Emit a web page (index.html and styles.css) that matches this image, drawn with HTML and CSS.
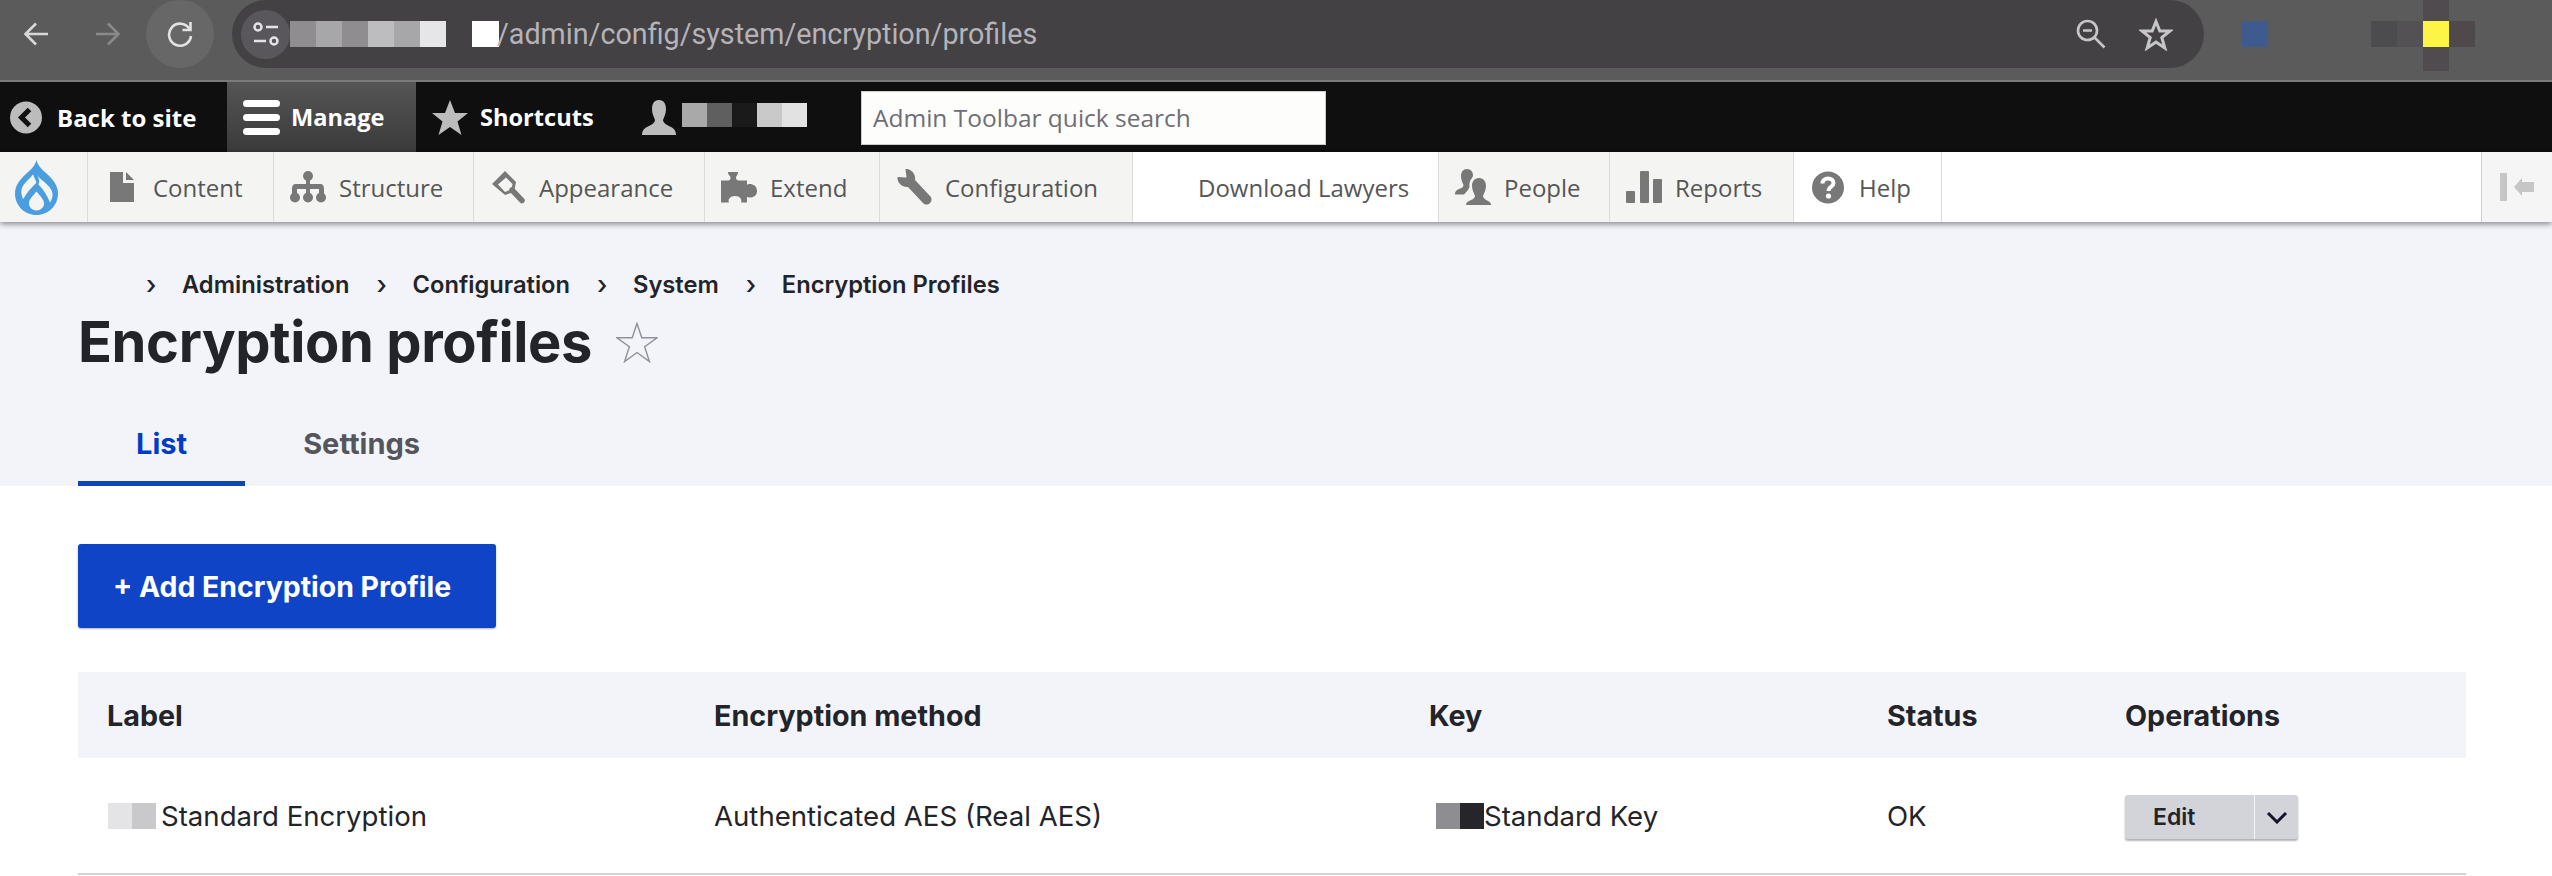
FILE: index.html
```html
<!DOCTYPE html>
<html>
<head>
    <title>Encryption profiles</title>
    <link rel="stylesheet" href="styles.css">
</head>
<body>

    <!-- browser bar -->
    <div class="chrome">
        <div class="navBtn">
            <svg width="26" height="26" viewBox="0 0 26 26" fill="none" stroke="#d8d8da" stroke-width="2.6"><path d="M25 13H3M13 2.500 2.500 13 13 23.500"/></svg>
        </div>
        <div class="navBtn">
            <svg width="26" height="26" viewBox="0 0 26 26" fill="none" stroke="#8a8a8c" stroke-width="2.600"><path d="M1 13H23M13 2.500 23.500 13 13 23.500"/></svg>
        </div>
        <div class="navBtn reload">
            <svg width="26" height="28" viewBox="0 0 26 28" fill="none" stroke="#e2e2e4" stroke-width="2.600"><path d="M22.500 9A11 11 0 1 0 24 16"/><path d="M23.500 2V10H15.500"/></svg>
        </div>
        <div class="pill">
            <div class="siteInfo">
                <svg width="26" height="24" viewBox="0 0 26 24" fill="none" stroke="#e4e4e6" stroke-width="2.500"><circle cx="5" cy="5" r="3.500"/><path d="M13 5H25M1 19H13"/><circle cx="21" cy="19" r="3.500"/></svg>
            </div>
            <div class="blur urlBlur">
                <span class="g1"></span><span class="g2"></span><span class="g1"></span><span class="g3"></span><span class="g2"></span><span class="g4"></span>
            </div>
            <div class="urlWhite"></div>
            <div class="urlText">/admin/config/system/encryption/profiles</div>
            <svg class="pillZoom" width="30" height="30" viewBox="0 0 30 30" fill="none" stroke="#c6c6c8" stroke-width="2.600"><circle cx="11.500" cy="11.500" r="9.500"/><path d="M7 11.500H16M18.500 18.500 28.500 28.500"/></svg>
            <svg class="pillStar" width="34" height="33" viewBox="0 0 34 33" fill="none" stroke="#c6c6c8" stroke-width="3"><path d="M17 3.500 20.800 13H31L22.800 19.500 25.800 30 17 24 8.200 30 11.200 19.500 3 13H13.200Z"/></svg>
        </div>
        <div class="extBlue"></div>
        <div class="extPixels">
            <span class="e1"></span><span class="e2"></span>
            <span class="eCol"><i></i><b></b><i></i></span>
            <span class="e3"></span>
        </div>
    </div>

    <!-- admin toolbar, black bar -->
    <div class="toolbar">
        <a class="barItem backSite">
            <svg width="32" height="33" viewBox="0 0 32 33"><circle cx="16" cy="16.500" r="16" fill="#bcbcbc"/><path d="M19.500 8.500 11.500 16.500 19.500 24.500" fill="none" stroke="#111" stroke-width="5"/></svg>
            Back to site
        </a>
        <a class="barItem manage">
            <svg width="37" height="35" viewBox="0 0 37 35" fill="#fff"><rect y="0" width="37" height="7" rx="3.500"/><rect y="14" width="37" height="7" rx="3.500"/><rect y="28" width="37" height="7" rx="3.500"/></svg>
            Manage
        </a>
        <a class="barItem shortcuts">
            <svg width="36" height="35" viewBox="0 0 36 35" fill="#bcbcbc"><path d="M18 0 23 13H36L25.500 21.500 29.500 35 18 27 6.500 35 10.500 21.500 0 13H13Z"/></svg>
            Shortcuts
        </a>
        <a class="barItem userItem">
            <svg width="34" height="35" viewBox="0 0 34 35" fill="#bcbcbc"><path d="M17 0C22 0 24 4 24 9 24 14 22 17 21 20 21 23 25 25 29 27 33 29 34 32 34 35H0C0 32 1 29 5 27 9 25 13 23 13 20 12 17 10 14 10 9 10 4 12 0 17 0Z"/></svg>
            <span class="blur userBlur">
                <span class="u1"></span><span class="u2"></span><span class="u3"></span><span class="u4"></span><span class="u5"></span>
            </span>
        </a>
        <input class="quickSearch" type="text" placeholder="Admin Toolbar quick search">
    </div>

    <!-- admin toolbar, white tray -->
    <div class="tray">
        <a class="trayItem logoItem">
            <svg width="43" height="55" viewBox="0 0 43 55"><path fill="#4a9ee0" fill-rule="evenodd" d="M21.500 0C23 6 27 9.500 32 14 38 19.500 43 25.500 43 33.500 43 45.500 33.500 55 21.500 55 9.500 55 0 45.500 0 33.500 0 25.500 5 19.500 11 14 16 9.500 20 6 21.500 0ZM18 14.500C15 18 11 21.500 8.500 25 6.500 28 6 31 6.500 33.500 6.700 35.500 7.300 37.500 8.300 39 11 33.500 16 28 21.500 22.500ZM22 15C24 18 28 20.500 32 24.500 36 28.500 38 31.500 37.500 35.500 37.300 38 36.500 40 35 42.500 32.500 36 28.500 29.500 23.500 24.500 25 21.500 24 18 22 15ZM21.500 31.500C18 36 14 39 14 43.500 14 47.500 17.500 50.500 21.500 50.500 25.500 50.500 29 47.500 29 43.500 29 39 25 36 21.500 31.500Z"/></svg>
        </a>
        <a class="trayItem">
            <span class="trayIcon"><svg width="24" height="30" viewBox="0 0 24 30" fill="#787878"><path d="M0 0H13V11H24V30H0Z"/><path d="M16 0 24 8H16Z"/></svg></span>
            Content
        </a>
        <a class="trayItem">
            <span class="trayIcon"><svg width="36" height="32" viewBox="0 0 36 32" fill="#787878"><circle cx="18" cy="5" r="5"/><circle cx="5" cy="26.500" r="5"/><circle cx="18" cy="26.500" r="5"/><circle cx="31" cy="26.500" r="5"/><path d="M16 8H20V13H30C33 13 34 15 34 18V23H29V18H20V23H16V18H7V23H2V18C2 15 3 13 6 13H16Z"/></svg></span>
            Structure
        </a>
        <a class="trayItem">
            <span class="trayIcon"><svg width="33" height="33" viewBox="0 0 33 33"><path fill="#787878" fill-rule="evenodd" d="M0 13 13 0 24 11 22 21 13 24ZM6 13.500 13 21 19.500 18.500 20.500 13 14 6.500Z"/><path d="M20 19 30 29.500" fill="none" stroke="#787878" stroke-width="5.500" stroke-linecap="round"/></svg></span>
            Appearance
        </a>
        <a class="trayItem">
            <span class="trayIcon"><svg width="36" height="31" viewBox="0 0 36 31" fill="#787878"><path d="M7 0H17C17 3 15 4 15 5.500 15 7.500 16 8.500 18 8.500H26V13C28 11 36 12 36 19 36 26 28 26 26 25V30.500H20C21.500 27.500 19 24 14 24 9 24 6.500 27.500 8 30.500H0V8.500H7C9 8.500 9.500 7.500 9.500 5.500 9.500 4 7 3 7 0Z"/></svg></span>
            Extend
        </a>
        <a class="trayItem">
            <span class="trayIcon"><svg width="35" height="36" viewBox="0 0 35 36" fill="#787878"><path d="M8.500 0 9.500 8.500 0.500 8C0 14 5 18.500 11 18L26 34C28 36 31 36 33 34 35 32 35 29 33 27L18 11C19 5 14 -0.500 8.500 0Z"/></svg></span>
            Configuration
        </a>
        <a class="trayItem plain">
            <span class="trayIcon"></span>
            Download Lawyers
        </a>
        <a class="trayItem">
            <span class="trayIcon"><svg width="36" height="36" viewBox="0 0 36 36" fill="#787878"><path d="M12 0C16 0 18 3 18 7L17 9C15 11 14 14 14.500 18L13 21 9 25.500H0C0 22 2 21 4 20 7 19 8.500 18 8.500 16 7 13 6 10 6 7 6 3 8 0 12 0Z"/><path d="M24 9C29 9 31 13 31 17 31 21 29 24 28 27 28 29 31 31 33 32 35 33 36 34 36 36H11C11 34 12 33 14 32 17 31 20 29 20 27 19 24 17 21 17 17 17 13 19 9 24 9Z"/></svg></span>
            People
        </a>
        <a class="trayItem">
            <span class="trayIcon"><svg width="36" height="32" viewBox="0 0 36 32" fill="#787878"><rect x="0" y="20" width="9" height="12" rx="1"/><rect x="14" y="0" width="9" height="32" rx="1"/><rect x="27" y="8" width="9" height="24" rx="1"/></svg></span>
            Reports
        </a>
        <a class="trayItem plain">
            <span class="trayIcon"><svg width="32" height="33" viewBox="0 0 32 33"><circle cx="16" cy="16.500" r="16" fill="#787878"/><path d="M10.500 12.500C10.500 9 13 7.500 16 7.500 19.500 7.500 21.500 9.500 21.500 12 21.500 16 16.500 15.500 16.500 20" fill="none" stroke="#fff" stroke-width="4"/><circle cx="16.500" cy="25" r="2.600" fill="#fff"/></svg></span>
            Help
        </a>
        <div class="trayFill"></div>
        <a class="trayToggle">
            <svg width="34" height="28" viewBox="0 0 34 28" fill="#c6c6c6"><rect x="0" y="0" width="7" height="28"/><path d="M14 14 22 5V9H34V19H22V23Z"/></svg>
        </a>
    </div>

    <div class="pageHead">
        <div class="crumbs">
            <span class="crumbHome"></span>
            <span class="sep">&rsaquo;</span><a>Administration</a>
            <span class="sep">&rsaquo;</span><a>Configuration</a>
            <span class="sep">&rsaquo;</span><a>System</a>
            <span class="sep">&rsaquo;</span><a>Encryption Profiles</a>
        </div>
        <div class="titleRow">
            <h1>Encryption profiles</h1>
            <svg width="42" height="41" viewBox="0 0 44 42" fill="none" stroke="#8f929b" stroke-width="1.500"><path d="M22 1 27 16H43L30 25.500 35 41 22 31.500 9 41 14 25.500 1 16H17Z"/></svg>
        </div>
        <div class="tabs">
            <a class="tab active">List</a>
            <a class="tab">Settings</a>
        </div>
    </div>

    <div class="content">
        <a class="addBtn">+ Add Encryption Profile</a>

        <table class="profiles">
            <colgroup>
                <col class="c1"><col class="c2"><col class="c3"><col class="c4"><col class="c5">
            </colgroup>
            <thead>
                <tr>
                    <th>Label</th>
                    <th>Encryption method</th>
                    <th>Key</th>
                    <th>Status</th>
                    <th>Operations</th>
                </tr>
            </thead>
            <tbody>
                <tr>
                    <td><span class="blur cellBlur"><span class="l1"></span><span class="l2"></span></span>Standard Encryption</td>
                    <td>Authenticated AES (Real AES)</td>
                    <td class="keyCell"><span class="blur cellBlur"><span class="k1"></span><span class="k2"></span></span>Standard Key</td>
                    <td>OK</td>
                    <td class="opsCell">
                        <div class="dropBtn">
                            <a class="dropEdit">Edit</a>
                            <a class="dropArrow"><svg width="22" height="13" viewBox="0 0 22 13" fill="none" stroke="#14142b" stroke-width="3"><path d="M2 2 11 11 20 2"/></svg></a>
                        </div>
                    </td>
                </tr>
            </tbody>
        </table>
    </div>

</body>
</html>
```

FILE: styles.css
```css
body {
    margin: 0;
    background-color: #fff;
    font-family: Inter, "Liberation Sans", sans-serif;
    color: #232429;
}

a {
    text-decoration: none;
    color: inherit;
}

.blur {
    display: flex;
}

/* browser bar */
.chrome {
    display: flex;
    height: 80px;
    border-bottom: 2px solid #7b7a7c;
    background-color: #5b5b5b;
}
.navBtn {
    width: 72px;
    height: 68px;
    display: flex;
    align-items: center;
    justify-content: center;
}
.reload {
    width: 68px;
    margin: 0 2px;
    border-radius: 50%;
    background-color: #676767;
}
.pill {
    width: 1972px;
    height: 68px;
    margin-left: 16px;
    display: flex;
    align-items: center;
    border-radius: 34px;
    background-color: #434144;
}
.siteInfo {
    width: 49px;
    height: 49px;
    margin-left: 9px;
    display: flex;
    align-items: center;
    justify-content: center;
    border-radius: 50%;
    background-color: #59575b;
}
.urlBlur {
    height: 26px;
}
.urlBlur span {
    width: 26px;
}
.g1 { background-color: #8f8d90; }
.g2 { background-color: #a7a6a9; }
.g3 { background-color: #bdbcbf; }
.g4 { background-color: #e6e6e8; }
.urlWhite {
    width: 27px;
    height: 26px;
    margin-left: 26px;
    background-color: #fff;
}
.urlText {
    margin-left: -2px;
    flex: 1;
    font-family: Roboto, sans-serif;
    font-size: 28.7px;
    color: #b5b3b7;
}
.pillZoom {
    margin-right: 33px;
}
.pillStar {
    margin-right: 31px;
}
.extBlue {
    width: 27px;
    height: 26px;
    margin: 21px 0 0 37px;
    background-color: #3f5a8c;
}
.extPixels {
    display: flex;
    align-items: flex-start;
    margin-left: 103px;
    padding-top: 21px;
}
.extPixels span {
    width: 26px;
    height: 26px;
}
.e1 { background-color: #4c4c4e; }
.e2 { background-color: #535153; }
.e3 { background-color: #4f494c; }
.extPixels .eCol {
    display: flex;
    flex-direction: column;
    margin-top: -21px;
    height: 71px;
}
.eCol i {
    display: block;
    height: 21px;
    background-color: #504b4e;
}
.eCol b {
    display: block;
    height: 26px;
    background-color: #fdf546;
}
.eCol i:last-child {
    height: 24px;
}

/* black bar */
.toolbar {
    display: flex;
    height: 70px;
    background-color: #0f0f10;
    color: #fff;
    font-family: "Open Sans", sans-serif;
    font-size: 23.6px;
    font-weight: 700;
}
.barItem {
    display: flex;
    align-items: center;
    gap: 15px;
}
.backSite {
    width: 217px;
    padding-left: 10px;
    font-size: 24px;
}
.manage {
    width: 173px;
    padding-left: 16px;
    gap: 11px;
    background: linear-gradient(#555555, #3a3a3a);
}
.shortcuts {
    width: 210px;
    padding-left: 16px;
    gap: 12px;
}
.userItem {
    width: 219px;
    gap: 6px;
}
.userBlur {
    height: 24px;
    margin-bottom: 4px;
}
.userBlur span {
    width: 25px;
}
.u1 { background-color: #a9a9a9; }
.u2 { background-color: #5f5f5f; }
.u3 { background-color: #1a1a1a; }
.u4 { background-color: #c9c9c9; }
.u5 { background-color: #e2e2e2; }
.quickSearch {
    box-sizing: border-box;
    width: 465px;
    height: 54px;
    margin-top: 9px;
    padding: 0 0 2px 11px;
    border: 1px solid #ccc;
    border-radius: 0;
    background-color: #fdfdfb;
    font-family: "Open Sans", sans-serif;
    font-size: 24.5px;
    outline: none;
}
.quickSearch::placeholder {
    color: #6f6e74;
    opacity: 1;
}

/* white tray */
.tray {
    display: grid;
    grid-template-columns: 88px 186px 200px 231px 175px 253px 306px 171px 184px 148px 1fr 71px;
    height: 70px;
    position: relative;
    background-color: #fff;
    box-shadow: 0 2px 6px rgba(0, 0, 0, 0.45);
    font-family: "Open Sans", sans-serif;
    font-size: 24px;
    color: #565656;
}
.trayItem {
    display: flex;
    align-items: center;
    gap: 15px;
    padding-left: 18px;
    border-right: 1px solid #dcdcdc;
    background-color: #f4f4f3;
}
.trayItem.plain {
    background-color: #fff;
}
.trayIcon {
    width: 32px;
    height: 38px;
    display: flex;
    align-items: center;
    justify-content: center;
}
.trayIcon svg {
    flex: none;
}
.logoItem {
    padding-left: 15px;
}
.trayToggle {
    display: flex;
    align-items: center;
    padding-left: 18px;
    border-left: 1px solid #cfcfcf;
    background-color: #f5f5f5;
}

/* page header */
.pageHead {
    height: 264px;
    padding-left: 78px;
    background-color: #f2f4f9;
    box-sizing: border-box;
    padding-top: 48px;
}
.crumbs {
    display: flex;
    align-items: center;
    height: 28px;
    font-size: 23.7px;
    font-weight: 600;
}
.crumbHome {
    width: 68px;
}
.sep {
    width: 36px;
    font-size: 26px;
    font-weight: 500;
}
.crumbs a {
    margin-right: 27px;
}
.titleRow {
    display: flex;
    align-items: center;
    gap: 24px;
    margin-top: 11px;
}
.titleRow h1 {
    margin: 0;
    font-size: 56px;
    font-weight: 700;
    line-height: 66px;
    letter-spacing: -0.4px;
}
.tabs {
    display: flex;
    margin-top: 26px;
}
.tab {
    box-sizing: border-box;
    height: 85px;
    padding: 25px 58px 0;
    font-size: 29px;
    font-weight: 700;
    line-height: 35px;
    color: #55565b;
}
.tab.active {
    color: #003cc5;
    border-bottom: 5px solid #1045b8;
}

/* content */
.content {
    padding: 58px 86px 0 78px;
}
.addBtn {
    display: inline-block;
    box-sizing: border-box;
    width: 418px;
    height: 84px;
    padding: 1px 0 0 35px;
    border-radius: 3px;
    background-color: #0f44c7;
    box-shadow: 0 1px 2px rgba(0, 0, 0, 0.3);
    font-size: 28.4px;
    font-weight: 700;
    line-height: 84px;
    color: #fff;
}
.profiles {
    width: 100%;
    margin-top: 44px;
    table-layout: fixed;
    border-collapse: collapse;
    font-size: 27.6px;
}
.c1 { width: 607px; }
.c2 { width: 715px; }
.c3 { width: 458px; }
.c4 { width: 238px; }
.profiles th {
    height: 86px;
    padding: 0 0 0 29px;
    background-color: #f2f4f9;
    font-size: 28.7px;
    font-weight: 700;
    text-align: left;
}
.profiles td {
    height: 115px;
    padding: 0 0 0 29px;
    border-bottom: 2px solid #d3d4d9;
}
.profiles td.opsCell {
    height: 112px;
    padding-top: 3px;
}
.cellBlur {
    display: inline-flex;
    height: 26px;
    margin: 0 5px 0 1px;
    vertical-align: -3px;
}
.cellBlur span {
    width: 24px;
}
.l1 { background-color: #e4e4e7; }
.l2 { background-color: #c9c9cc; }
.k1 { background-color: #8e8d92; }
.k2 { background-color: #26252a; }
.keyCell .cellBlur {
    margin-left: 7px;
    margin-right: 0;
}
.dropBtn {
    display: flex;
    width: 173px;
    height: 44px;
    border-radius: 3px;
    background-color: #d3d4d9;
    box-shadow: 0 2px 2px rgba(0, 0, 0, 0.3);
    font-size: 23px;
    font-weight: 600;
    line-height: 44px;
}
.dropEdit {
    width: 130px;
    box-sizing: border-box;
    padding-left: 28px;
    border-right: 1px solid #f4f4f6;
}
.dropArrow {
    flex: 1;
    display: flex;
    align-items: center;
    justify-content: center;
}
```
